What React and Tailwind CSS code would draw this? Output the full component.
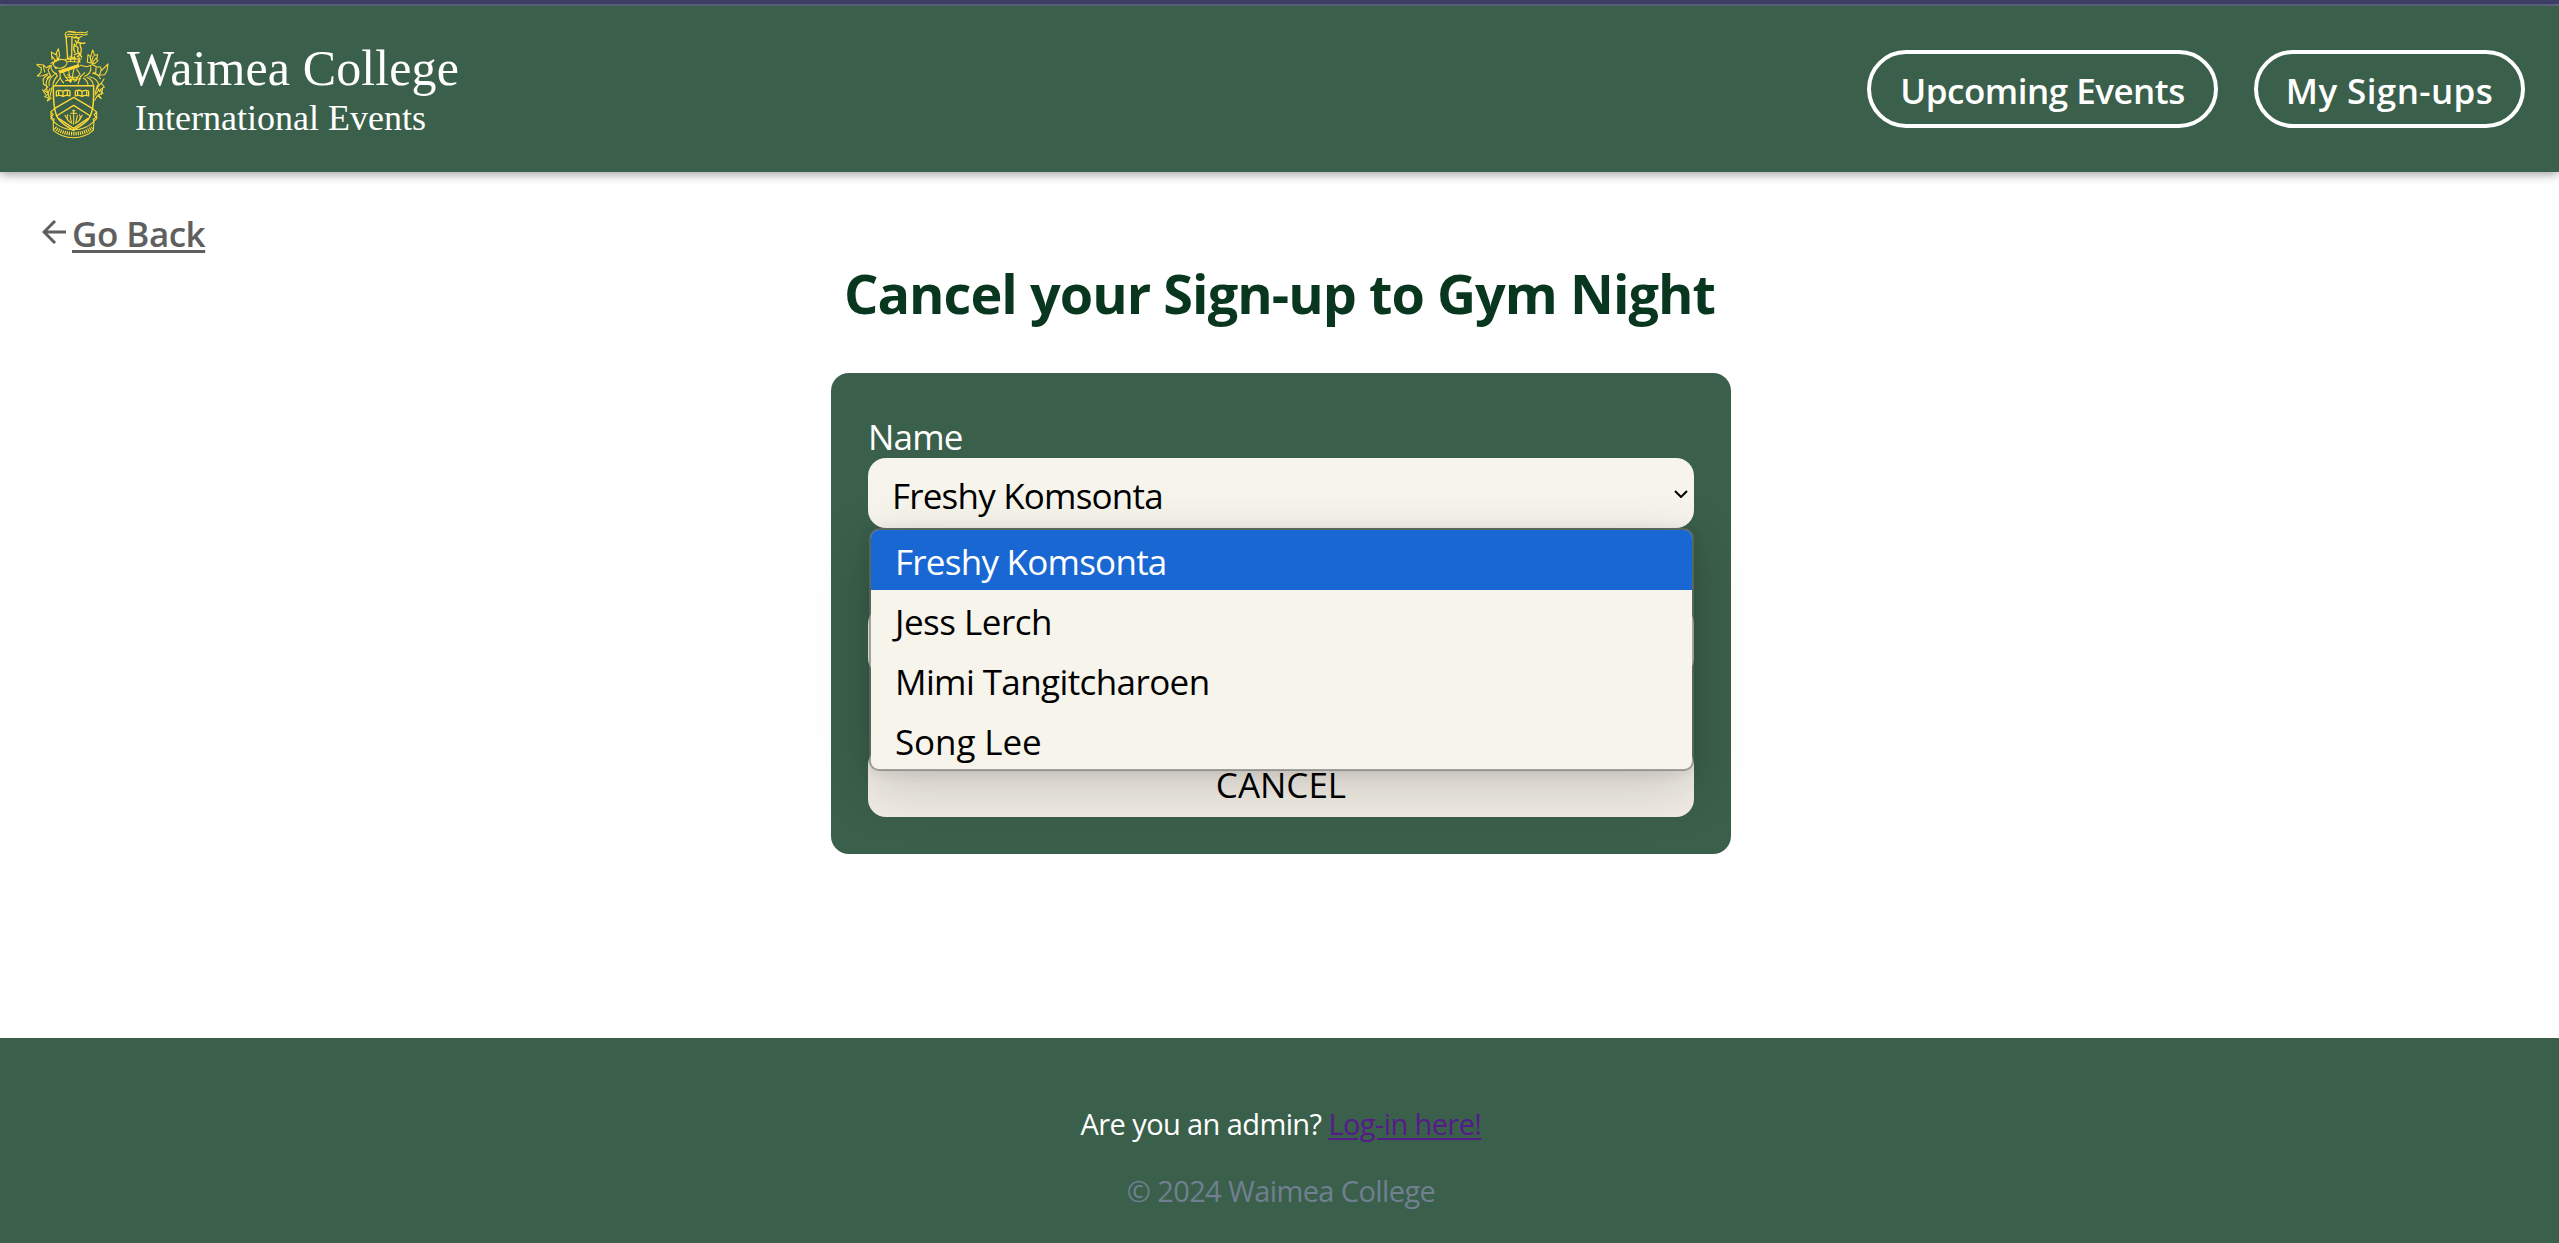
const people = [
  { name: "Freshy Komsonta", fit: "h-[60px] bg-[#1967d2] text-white tracking-[-0.75px]" },
  { name: "Jess Lerch", fit: "h-[60px] tracking-[-0.5px]" },
  { name: "Mimi Tangitcharoen", fit: "h-[60px] tracking-[-0.6px]" },
  { name: "Song Lee", fit: "h-[59px] tracking-[-0.1px]" },
];

function Crest() {
  return (
    <svg className="h-[130px] w-[90px] shrink-0" viewBox="0 0 270 390" fill="none" stroke="#fdd835" strokeWidth="3.200" strokeLinecap="round" strokeLinejoin="round">
      {/* torch and flame */}
      <path d="M108 48l5 68M126 50l-1 64" strokeWidth="4" />
      <path d="M106 48c-2-8 2-13 10-13 10 0 14 4 24 3 8-1 14-3 20 0 4 1 8 0 13-3M112 44c8-4 16 2 26 0s16-2 22 0 8 1 12-2M108 52c10-4 18-3 28 1 8 3 14-2 20-4M116 34l20 2" />
      {/* figure beside the torch */}
      <path d="M132 54l7-4 8 7-4 9 9 5 13-2M136 62l5 8-5 8 8 4-1 12 7 8-8 8M148 68l9 2M133 72l-2 14 4 12M150 74l4 14-2 14M134 104l12-5 9 12" strokeWidth="4" />
      {/* helmet */}
      <path d="M70 132c5-13 20-15 32-13 10 2 12 12 4 19-8 8-24 9-30 3M106 118l48-1M108 124l40 2M76 120l-8 12 10 14M128 112l18 8-2 14M112 112l10 8 10-8M120 108l2 16M134 108v16M146 108l4 18" />
      <path d="M86 153l58-19 3 6-56 19z" fill="#fdd835" />
      <path d="M91 157c-3 12 1 24 10 32M100 155c2 12 12 24 22 32M116 150l6 36M132 146l-8 38M140 148l10 14-16 22M108 172h36M106 182l46-6M112 164l28 18" />
      {/* upper plumes */}
      <path d="M66 118l-2-22 12 8 9-18 4 20-5 16M67 110l11 14M80 100l2 21M87 112l-7 11M69 126l-6 4" />
      <path d="M172 126l2-22 8 6 6-20 6 16 9-2-3 14 4 4-10 9-22-4M180 110l3 15M190 108l-6 19M198 114l-10 14M150 136l20 4 14-4" />
      {/* side mantling */}
      <path d="M20 133l20 2 9 8 12-7M22 136l12 8-1 13-11 11 16-1 16-6M40 138l4 18M60 140l-6 10 7 16-10 9M64 136c-4 9 4 22 16 25M52 166c-12 6-15 15-11 25M62 168c-10 7-16 15-13 29M72 164c-14 12-18 20-14 32M82 168c-8 8-12 14-13 26M90 174l-13 19M68 154l14 13" />
      <path d="M186 133l14 8 11 0 4 10 19-19-3 20-7 12-19 2-14-9M198 144l-1 19M214 148l-5 15M182 140c3 12-4 24-18 29M188 160c14 3 20 9 23 16M178 170c16 3 26 12 28 25M171 172c12 6 18 12 19 23M160 174c9 5 13 11 14 20M152 168l-8 24M164 158l-14 14" />
      <path d="M40 193l14 7-11 12 13 9-12 9 12 3-4 10 12-9M49 203l7 26M60 206l-6 13M66 202l-7 31M38 209l8 14" />
      <path d="M222 177l-8 13 9 11-13 8 9 11-14 4 9 12-12-9-8 14M212 190l-10 13 8 13M202 196l-6 23M206 209l-10 16M218 205l-4 19" />
      {/* shield */}
      <path d="M70 197h121c0 35 1 75-14 98-9 14-28 25-47 36-19-11-38-24-46-36-14-23-14-63-14-98z" strokeWidth="4.500" />
      <path d="M73 266l58-34 57 34M79 288l52-32 50 32M87 296l44 29 42-29" strokeWidth="4" />
      <path d="M79 213c8-4 14-2 20 1 7-4 14-4 21-1v15c-7-3-14-2-21 1-6-3-12-4-20-1zM99 214v15M136 213c7-3 14-3 20 1 7-3 14-4 20-1v15c-7-3-13-2-20 1-6-3-13-4-20-1zM156 214v15" strokeWidth="4" />
      <path d="M86 215v11M112 215v11M143 215v11M170 215v11" strokeWidth="4" />
      <path d="M131 269v44M122 280h18M127 272h8M113 284c-5 11 1 20 13 26M120 286l4 20M149 284c5 11-1 20-13 26M142 286l-4 20M105 286l7 12M157 286l-7 12" />
      {/* ribbon */}
      <path d="M71 268l-9 8 8 8-7 7 10 7-3 6M63 276v20l8 7M190 268l10 8-8 8 7 7-10 7 3 6M200 276v20l-8 7M70 304c16 16 38 25 61 25s46-9 61-25l-2 27c-16 14-36 22-59 22s-45-8-61-22z" />
      <path d="M75 323c15 12 34 18 56 18s41-6 56-18" strokeWidth="11" strokeLinecap="butt" strokeDasharray="3.500 3" />
    </svg>
  );
}

function NavButton({ children, className }) {
  return (
    <a className={`flex h-[78px] items-center justify-center rounded-[39px] border-4 border-white pt-[5px] text-[35px] font-semibold whitespace-nowrap text-white ${className}`}>
      {children}
    </a>
  );
}

export default function App() {
  return (
    <div className="flex h-[1243px] w-[2559px] flex-col overflow-hidden bg-white font-['Open_Sans','Noto_Sans',sans-serif]">
      <div className="h-[6px] shrink-0 border-b-2 border-[#676a8a] bg-[#3e4068]" />
      <header className="flex h-[166px] shrink-0 items-start justify-between bg-[#3a5f4a] pr-[34px] pl-[30px] shadow-[0_2px_10px_rgba(0,0,0,0.4)]">
        <div className="flex pt-[14px]">
          <Crest />
          <div className="flex flex-col pt-[18px] pl-[7px] font-['Liberation_Serif',serif] whitespace-nowrap text-white">
            <span className="text-[50px] leading-[60px] tracking-[0.1px]">Waimea College</span>
            <span className="pl-[8px] text-[36px] leading-[40px]">International Events</span>
          </div>
        </div>
        <nav className="flex gap-9 pt-[44px]">
          <NavButton className="w-[351px] tracking-[-0.5px]">Upcoming Events</NavButton>
          <NavButton className="w-[271px] tracking-[0.4px]">My Sign-ups</NavButton>
        </nav>
      </header>

      <main className="flex min-h-0 flex-1 flex-col items-center pt-9">
        <a className="flex h-12 items-center self-start pl-[42px] text-[35px] font-semibold text-[#5f5f5f]">
          <svg className="mr-[6px] h-6 w-6" viewBox="0 0 24 24" fill="none" stroke="currentColor" strokeWidth="3">
            <path d="M24 12H1.500M13 1L2 12l11 11" />
          </svg>
          <span className="pt-1 leading-[48px] tracking-[-0.500px] underline decoration-[3px] underline-offset-[3px]">Go Back</span>
        </a>
        <h1 className="pt-px text-[54px] leading-[73px] font-bold tracking-[-0.96px] whitespace-nowrap text-[#08361f]">
          Cancel your Sign-up to Gym Night
        </h1>

        <form className="mt-[43px] ml-[3px] flex h-[481px] w-[900px] flex-col rounded-[18px] bg-[#3a5f4a] p-[37px] text-[35px] text-black">
          <label className="h-12 pt-[3px] leading-[48px] tracking-[-0.8px] text-white">Name</label>
          <div className="relative">
            <div className="flex h-[70px] items-center justify-between rounded-[18px] bg-[#f7f4ec] pt-1.5 pr-[6px] pl-6">
              <span className="tracking-[-0.8px]">Freshy Komsonta</span>
              <svg className="mb-[5px] h-2 w-[14px]" viewBox="0 0 14 8" fill="none" stroke="currentColor" strokeWidth="2">
                <path d="M1 1l6 6 6-6" />
              </svg>
            </div>
            <ul className="absolute top-[70px] left-[1px] z-10 w-[825px] overflow-hidden rounded-[10px] border-2 border-[#6e6e6e]/60 bg-[#f7f4ec] bg-clip-padding shadow-[0_16px_56px_rgba(0,0,0,0.17),0_2px_14px_rgba(0,0,0,0.09)]">
              {people.map(({ name, fit }) => (
                <li key={name} className={`flex items-center pt-[5px] pl-6 ${fit}`}>
                  {name}
                </li>
              ))}
            </ul>
          </div>
          <div className="mt-[78px] h-[70px] rounded-[18px] bg-[#f7f4ec]" />
          <button type="button" className="mt-auto flex h-[70px] items-center justify-center rounded-[18px] bg-[#f1ede5] pt-[7px]">
            CANCEL
          </button>
        </form>
      </main>

      <footer className="flex h-[205px] shrink-0 flex-col items-center bg-[#3a5f4a] pt-[66px] pl-[3px] text-[29px] leading-[40px] tracking-[-0.6px]">
        <p className="text-white">
          Are you an admin? <a className="text-[#551a8b] underline decoration-2 underline-offset-[3px]">Log-in here!</a>
        </p>
        <p className="mt-[27px] text-[#708090]">© 2024 Waimea College</p>
      </footer>
    </div>
  );
}
